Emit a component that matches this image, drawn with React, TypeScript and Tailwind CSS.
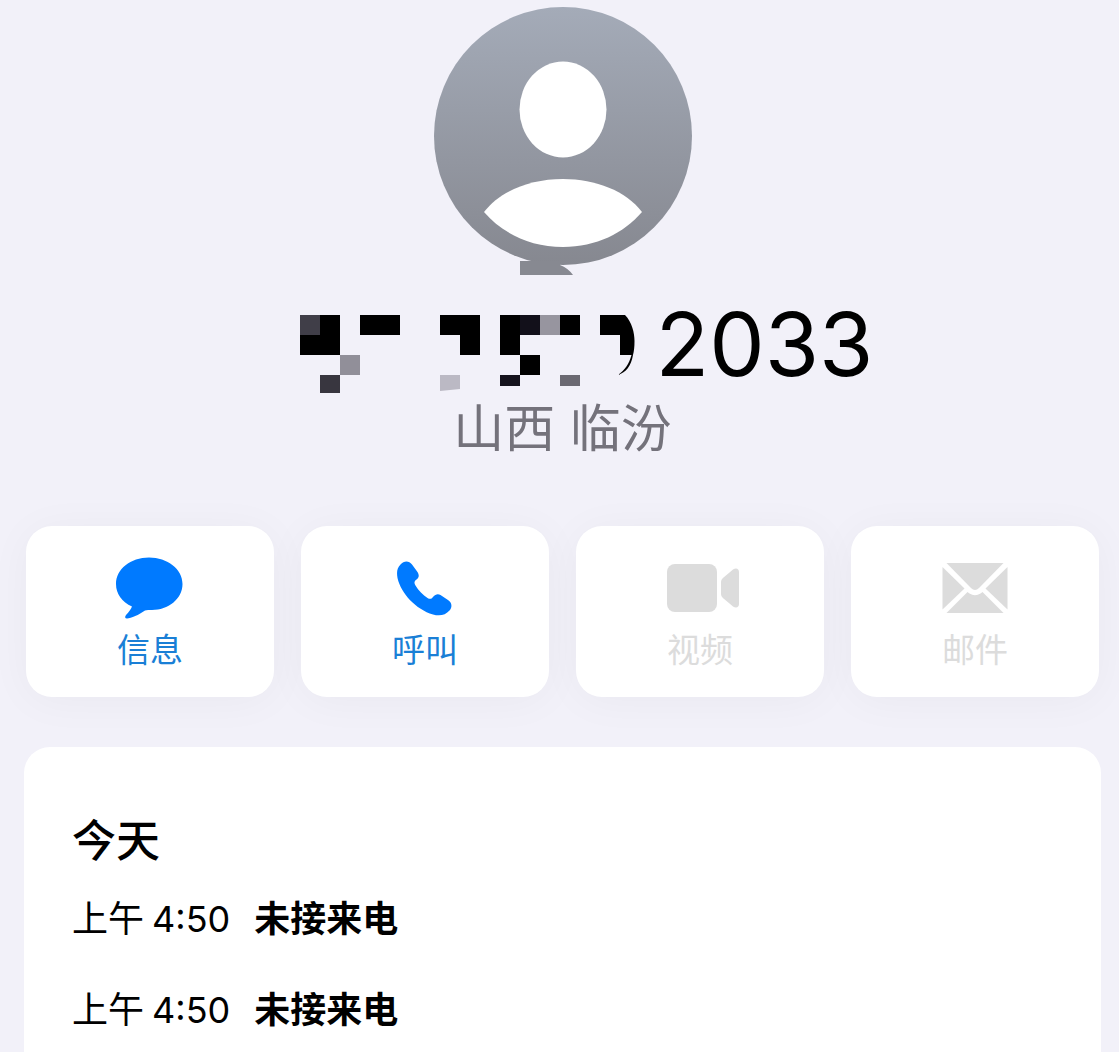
import React from "react";
import clsx from "clsx";

const actions = [
  { id: "message", label: "信息", icon: <MessageIcon />, enabled: true },
  { id: "call", label: "呼叫", icon: <PhoneIcon />, enabled: true },
  { id: "video", label: "视频", icon: <VideoIcon />, enabled: false },
  { id: "mail", label: "邮件", icon: <MailIcon />, enabled: false },
];

const calls = [
  { id: 1, period: "上午", time: "4:50", status: "未接来电" },
  { id: 2, period: "上午", time: "4:50", status: "未接来电" },
];

function MessageIcon() {
  return (
    <svg viewBox="0 0 68 62" className="h-[62px] w-[68px]" fill="currentColor" aria-hidden="true">
      <path d="M33 0.500C51.500 0.500 66.500 12 66.500 27C66.500 42 52 53 36 53C33 53 31 53 29 53.500C23 58 15 61 11 61.500C9 61.500 8.500 60 10 58C13 55 15 52 16 49.500C6 45 0 37 0 27C0 12 14.500 0.500 33 0.500Z" />
    </svg>
  );
}

function PhoneIcon() {
  return (
    <svg viewBox="0 0 56 56" className="h-[56px] w-[56px]" fill="currentColor" aria-hidden="true">
      <path d="M3.500 4.500C7 0.500 12 0.500 15 4.500L20.500 12C22.500 15.500 22 17.500 19.500 19.500C17 21.500 17 23 18.500 25.500C21.500 30.500 26 35 30.500 38C33 39.500 34.500 39 36 37C38.500 34 41 33.500 43.500 35L51 40C55 42.500 55.500 47 52.500 50.500C48.500 55 43 56.500 36 54.500C19 49.500 4 33.500 0.500 18C-0.500 12 0 8 3.500 4.500Z" />
    </svg>
  );
}

function VideoIcon() {
  return (
    <svg viewBox="-5 0 79 50" className="h-[50px] w-[79px]" fill="currentColor" aria-hidden="true">
      <rect x="1" y="1" width="50" height="48" rx="8" />
      <path d="M55 19C55 17 56 16 57.500 14.500L67 6.500C70 4.500 73 5.500 73 9V41C73 44.500 70 45.500 67 43.500L57.500 35.500C56 34 55 33 55 31Z" />
    </svg>
  );
}

function MailIcon() {
  return (
    <svg viewBox="0 0 66 52" className="h-[52px] w-[66px]" fill="currentColor" aria-hidden="true">
      <path d="M4.500 1H61.500L37 26Q33 30 29 26Z" />
      <path d="M0.500 5L22.500 26.500L0.500 47.500Z" />
      <path d="M65.500 5L43.500 26.500L65.500 47.500Z" />
      <path d="M4.500 51L25.500 30L27.500 31.500Q33 35 38.500 31.500L40.500 30L61.500 51Z" />
    </svg>
  );
}

function Avatar() {
  return (
    <svg viewBox="0 0 258 268" className="h-[268px] w-[258px]" role="img" aria-label="头像">
      <defs>
        <linearGradient id="avatar-bg" x1="0" y1="0" x2="0" y2="1">
          <stop offset="0" stopColor="#a4abb8" />
          <stop offset="1" stopColor="#868890" />
        </linearGradient>
      </defs>
      <circle cx="129" cy="129" r="129" fill="url(#avatar-bg)" />
      <path d="M86 254H126V258Q134 261 139 268H86Z" fill="#878991" />
      <ellipse cx="129" cy="102.500" rx="43.500" ry="48" fill="#fff" />
      <path
        d="M50 205C66 184 96 172 129 172C162 172 192 184 208 205C190 226 162 240 129 240C96 240 68 226 50 205Z"
        fill="#fff"
      />
    </svg>
  );
}

// leading digits are hidden behind a pixel mosaic
function MaskedDigits() {
  return (
    <svg viewBox="252 299 384 94" className="h-[94px] w-[384px]" aria-hidden="true">
      <g shapeRendering="crispEdges">
        <path
          d="M320 315h20v40h-40v-20h20zM360 315h40v20h-40zM440 315h40v40h-20v-20h-20zM500 315h20v40h-20zM560 315h20v20h-20zM520 355h20v20h-20z"
          fill="#000"
        />
        <rect x="300" y="315" width="20" height="20" fill="#403e48" />
        <rect x="340" y="355" width="20" height="20" fill="#918f99" />
        <rect x="320" y="375" width="20" height="18" fill="#38363f" />
        <rect x="520" y="315" width="20" height="20" fill="#12101a" />
        <rect x="540" y="315" width="20" height="20" fill="#97959f" />
        <rect x="500" y="375" width="20" height="11" fill="#15131d" />
        <rect x="560" y="375" width="20" height="11" fill="#6b6972" />
      </g>
      <path d="M440 375h20v14l-20 2z" fill="#bbb9c4" />
      <path d="M600 315H625C632 322 634.500 333 634.500 341C634.500 347 634 351 633 355H620V335H600Z" />
      <path d="M633 355C631 366 626 372.500 618 375C625 370 629 364 631.500 355Z" />
    </svg>
  );
}

export default function App() {
  return (
    <main className="flex min-h-screen flex-col bg-[#f2f1f9] pt-[7px] pr-[18px] pl-6 font-['Inter','Noto_Sans_CJK_SC',sans-serif] text-black">
      <header className="flex flex-col items-center">
        <Avatar />
        <h1 className="mt-6 flex h-[100px] items-start justify-center gap-5 font-normal">
          <MaskedDigits />
          <span className="text-[88px] leading-[90px]">2033</span>
        </h1>
        <p className="text-[51px] leading-[60px] text-[#74727b]">山西 临汾</p>
      </header>

      <div className="mt-[67px] grid grid-cols-4 gap-[27px] px-[2px]">
        {actions.map((action) => (
          <button
            key={action.id}
            type="button"
            disabled={!action.enabled}
            className={clsx(
              "flex h-[171px] flex-col items-center rounded-[26px] bg-white pt-[30px] shadow-[0_4px_44px_rgba(0,0,0,0.04)]",
              action.enabled ? "text-[#007aff]" : "text-[#dcdcdc]"
            )}
          >
            <span className="flex h-16 items-center">{action.icon}</span>
            <span
              className={clsx(
                "mt-2 text-[33px] leading-[44px]",
                action.enabled ? "text-[#1a7fd6]" : "text-[#dcdcdc]"
              )}
            >
              {action.label}
            </span>
          </button>
        ))}
      </div>

      <section className="mt-[50px] flex-1 rounded-t-[26px] bg-white px-12 pt-[62px]">
        <h2 className="text-[44px] leading-[64px] font-medium">今天</h2>
        <ul>
          {calls.map((call) => (
            <li key={call.id} className="flex h-[91px] items-center text-[36px] leading-[44px]">
              <span>{call.period}</span>
              <time className="ml-2">{call.time}</time>
              <span className="ml-6 font-bold">{call.status}</span>
            </li>
          ))}
        </ul>
      </section>
    </main>
  );
}
